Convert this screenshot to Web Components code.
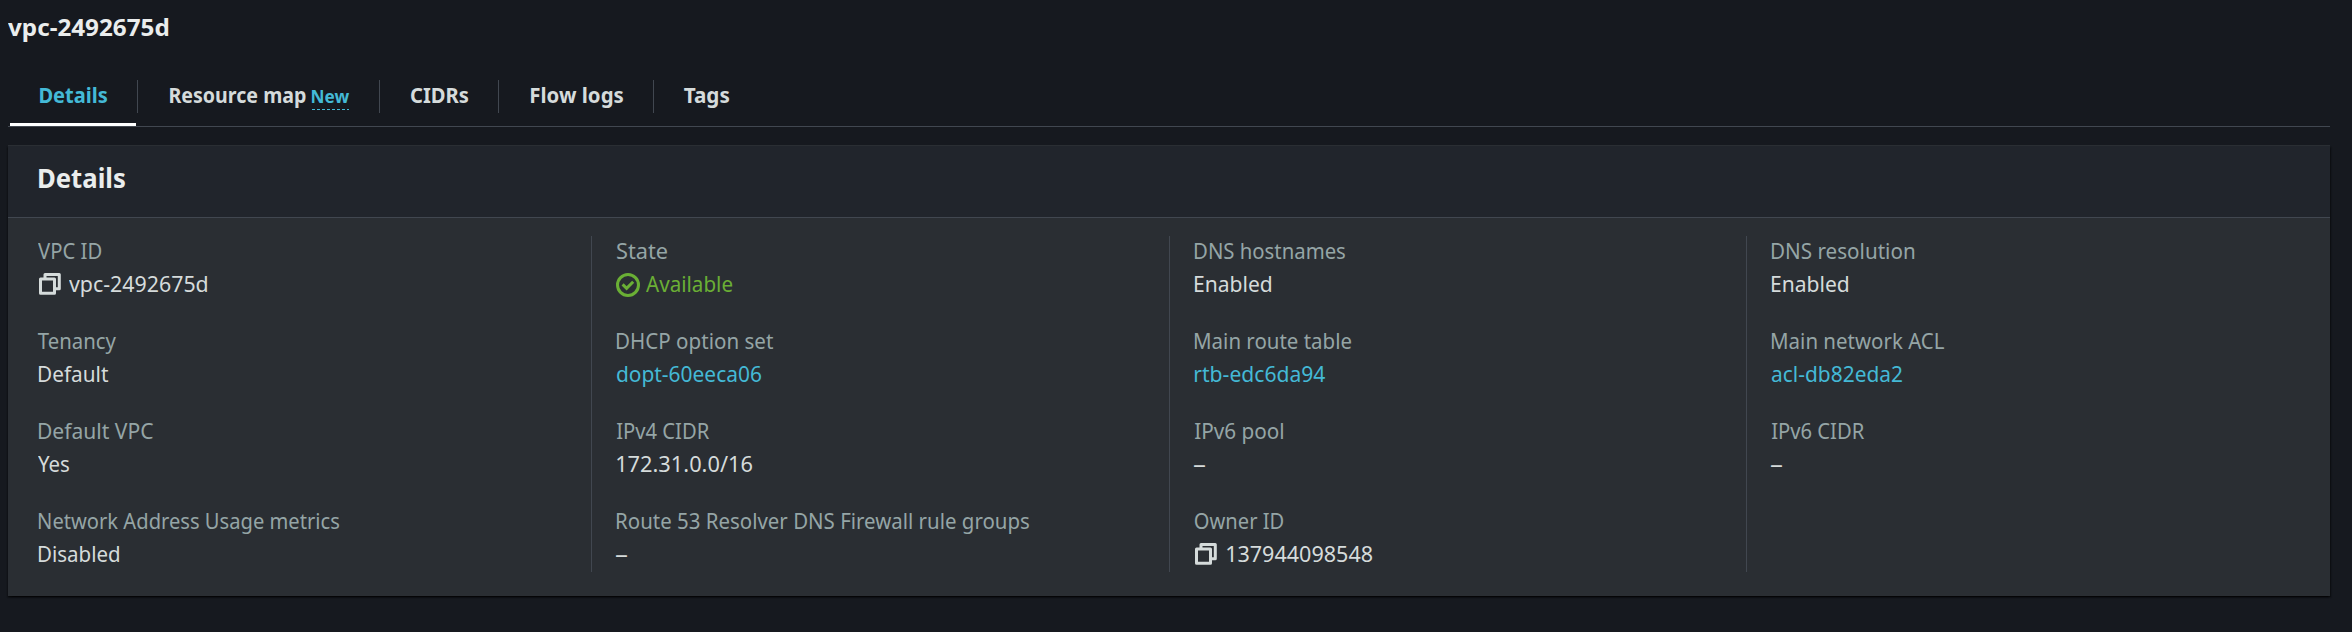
<!DOCTYPE html>
<html lang="en">
<head>
<meta charset="utf-8">
<title>vpc-2492675d</title>
<style>
html,body{margin:0;height:632px;overflow:hidden;background:#16191f}
body{font-family:"Noto Sans","Open Sans",sans-serif;font-size:21px;color:#d5dbdb}
</style>
</head>
<body>
<vpc-page></vpc-page>
<script>
// Text run whose visible glyphs span exactly `w` pixels.
const pen = document.createElement('canvas').getContext('2d');
class FitText extends HTMLElement {
  connectedCallback() {
    const root = this.shadowRoot || this.attachShadow({mode: 'open'});
    root.innerHTML = `<style>:host{display:inline-block;white-space:nowrap}span{display:inline-block;transform-origin:0 50%}</style><span><slot></slot></span>`;
    const w = +this.getAttribute('w'), cs = getComputedStyle(this), size = parseFloat(cs.fontSize);
    // Measured at 10x so that the glyph bounds keep their fractions.
    pen.font = `${cs.fontWeight} ${size * 10}px ${cs.fontFamily}`;
    const m = pen.measureText(this.textContent);
    const left = m.actualBoundingBoxLeft / 10, right = m.actualBoundingBoxRight / 10;
    const s = w / (right + left);
    this.style.width = w + 'px';
    root.querySelector('span').style.transform = `translateX(${left * s}px) scaleX(${s})`;
  }
}
customElements.define('fit-text', FitText);

class UiIcon extends HTMLElement {
  connectedCallback() {
    const copy = '<svg width="22" height="22" viewBox="0 0 22 22" fill="none" stroke="currentColor" stroke-width="3" stroke-linejoin="round"><path d="M1.5 6H15.5V20.2H1.5Z" /><path d="M6 6V1.5H20.3V15.7H15.5" /></svg>';
    const check = '<svg width="24" height="24" viewBox="0 0 24 24" fill="none" stroke="currentColor" stroke-width="3"><circle cx="12" cy="12" r="10.5"/><path d="M6.6 11.4l4 3.9 6.6-6.5"/></svg>';
    this.attachShadow({mode: 'open'}).innerHTML = `<style>:host{display:block}svg{display:block}</style>` + (this.getAttribute('name') === 'copy' ? copy : check);
  }
}
customElements.define('ui-icon', UiIcon);

class UiTab extends HTMLElement {
  connectedCallback() {
    this.attachShadow({mode: 'open'}).innerHTML = `<style>
      :host{display:flex;box-sizing:border-box;height:46px;padding:0 30px 0 33px;position:relative;font-weight:700;line-height:30px}
      :host([tight]){padding-left:32px}
      :host([last]){padding-left:31px}
      :host(:not([last]))::after{content:"";position:absolute;right:-1px;top:0;width:1px;height:33px;background:#414750}
      :host([active]){color:#44b9d6}
      :host([active])::before{content:"";position:absolute;left:2px;right:1px;bottom:0;height:3px;background:#fff}
    </style><slot></slot>`;
  }
}
customElements.define('ui-tab', UiTab);

class UiField extends HTMLElement {
  connectedCallback() {
    const a = n => this.getAttribute(n);
    const icon = a('icon');
    // V, T, Y and the dash hang slightly to the left of the stems.
    const hang = t => /^[VTY–]/.test(t) ? 'class="hang"' : '';
    this.attachShadow({mode: 'open'}).innerHTML = `<style>
      :host{display:block;height:66px;line-height:31px}
      .l,.v{height:33px;display:flex}
      .l{color:#95a5a6}
      .v.link{color:#44b9d6}
      .v.ok{color:#6aaf35}
      .hang{margin-left:-.8px}
      .copy ui-icon{margin:4px 8px 0 .5px}
      .copy fit-text.hang{margin-left:0}
      .ok ui-icon{margin:4px 6px 0 -.7px}
    </style><div class="l"><fit-text ${hang(a('label'))} w="${a('lw')}">${a('label')}</fit-text></div>
    <div class="v ${a('kind') || ''}">${icon ? `<ui-icon name="${icon}"></ui-icon>` : ''}<fit-text ${hang(a('value'))} w="${a('vw')}">${a('value')}</fit-text></div>`;
    if (/^\d+$/.test(a('value'))) this.shadowRoot.querySelector('.v fit-text').style.marginLeft = '1.5px';
  }
}
customElements.define('ui-field', UiField);

class UiColumn extends HTMLElement {
  connectedCallback() {
    this.attachShadow({mode: 'open'}).innerHTML = `<style>
      :host{display:flex;flex-direction:column;gap:24px;box-sizing:border-box;height:336px;padding-left:25px;border-left:1px solid #414750}
      :host([first]){border-left-color:transparent;padding-left:24.8px}
    </style><slot></slot>`;
  }
}
customElements.define('ui-column', UiColumn);

class UiPanel extends HTMLElement {
  connectedCallback() {
    this.attachShadow({mode: 'open'}).innerHTML = `<style>
      :host{display:block;box-sizing:border-box;height:451px;background:#2a2e33;border-top:1px solid #2a2e33;box-shadow:0 1.5px 1.5px 0 rgba(0,0,0,.5),1.5px 1.5px 1.5px 0 rgba(0,0,0,.3),-1.5px 1.5px 1.5px 0 rgba(0,0,0,.3)}
      header{box-sizing:border-box;height:72px;padding:13px 0 0 31px;background:#21252c;border-bottom:1px solid #414750;font-size:26.5px;font-weight:700;line-height:38px;color:#eaeded}
      .body{display:grid;grid-template-columns:repeat(4,1fr);padding:18px 6px 24px 5px}
    </style><header><slot name="header"></slot></header><div class="body"><slot></slot></div>`;
  }
}
customElements.define('ui-panel', UiPanel);

class VpcPage extends HTMLElement {
  connectedCallback() {
    this.attachShadow({mode: 'open'}).innerHTML = `<style>
      :host{display:block;box-sizing:border-box;height:632px;padding:0 22px 0 8px}
      h1{margin:0;height:80px;font-size:23px;line-height:32px;font-weight:700;color:#eaeded;padding-top:11px;box-sizing:border-box}
      nav{display:flex;height:46px;border-bottom:1px solid #414750;margin-bottom:18px}
      .new{font-size:17px;color:#44b9d6;margin-left:6.5px;height:30px;line-height:33px;background:repeating-linear-gradient(90deg,#44b9d6 0 3px,transparent 3px 5px) 0 100%/100% 1px no-repeat}
    </style>
    <h1><fit-text w="160">vpc-2492675d</fit-text></h1>
    <nav>
      <ui-tab active tight><fit-text w="67">Details</fit-text></ui-tab>
      <ui-tab><fit-text w="135.5">Resource map</fit-text><fit-text class="new" w="37">New</fit-text></ui-tab>
      <ui-tab tight><fit-text w="57">CIDRs</fit-text></ui-tab>
      <ui-tab><fit-text w="92">Flow logs</fit-text></ui-tab>
      <ui-tab tight last><fit-text w="45">Tags</fit-text></ui-tab>
    </nav>
    <ui-panel>
      <fit-text slot="header" w="86">Details</fit-text>
      <ui-column first>
        <ui-field label="VPC ID" lw="63" value="vpc-2492675d" vw="138" icon="copy" kind="copy"></ui-field>
        <ui-field label="Tenancy" lw="78" value="Default" vw="69"></ui-field>
        <ui-field label="Default VPC" lw="114" value="Yes" vw="31"></ui-field>
        <ui-field label="Network Address Usage metrics" lw="300" value="Disabled" vw="80"></ui-field>
      </ui-column>
      <ui-column>
        <ui-field label="State" lw="50" value="Available" vw="86" icon="check" kind="ok"></ui-field>
        <ui-field label="DHCP option set" lw="156" value="dopt-60eeca06" vw="144" kind="link"></ui-field>
        <ui-field label="IPv4 CIDR" lw="92" value="172.31.0.0/16" vw="135"></ui-field>
        <ui-field label="Route 53 Resolver DNS Firewall rule groups" lw="412" value="–" vw="11"></ui-field>
      </ui-column>
      <ui-column>
        <ui-field label="DNS hostnames" lw="150" value="Enabled" vw="76"></ui-field>
        <ui-field label="Main route table" lw="156" value="rtb-edc6da94" vw="130" kind="link"></ui-field>
        <ui-field label="IPv6 pool" lw="88" value="–" vw="11"></ui-field>
        <ui-field label="Owner ID" lw="88" value="137944098548" vw="145" icon="copy" kind="copy"></ui-field>
      </ui-column>
      <ui-column>
        <ui-field label="DNS resolution" lw="142" value="Enabled" vw="76"></ui-field>
        <ui-field label="Main network ACL" lw="172" value="acl-db82eda2" vw="130" kind="link"></ui-field>
        <ui-field label="IPv6 CIDR" lw="92" value="–" vw="11"></ui-field>
      </ui-column>
    </ui-panel>`;
  }
}
customElements.define('vpc-page', VpcPage);
</script>
</body>
</html>
